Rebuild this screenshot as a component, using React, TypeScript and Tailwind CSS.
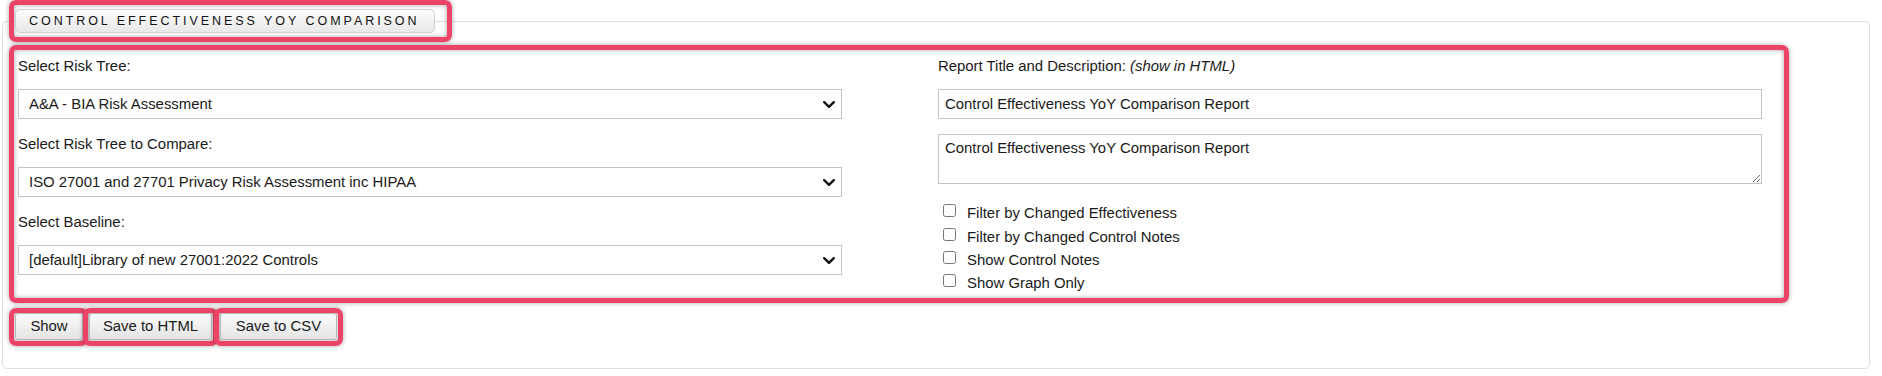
import React from "react";

const redBox =
  "border-[5px] border-[#eb4468] rounded-[7px] shadow-[0_0_5px_rgba(0,0,0,0.35),inset_0_0_5px_rgba(0,0,0,0.35)]";

const btn =
  "h-[27px] rounded-[3px] border border-[#b9b9b9] bg-gradient-to-b from-[#fbfbfb] to-[#e4e4e4] text-[14.9px] leading-[17px] text-[#1a1a1a] flex items-center justify-center";

function Chevron() {
  return (
    <svg
      className="absolute right-[7px] top-[12px] pointer-events-none"
      width="12"
      height="7"
      viewBox="0 0 12 7"
      fill="none"
    >
      <path d="M1.2 1.2 L6 5.8 L10.8 1.2" stroke="#111" strokeWidth="2.4" strokeLinecap="round" strokeLinejoin="round" />
    </svg>
  );
}

function Select({ value }: { value: string }) {
  return (
    <div className="relative w-[824px] h-[30px]">
      <select
        defaultValue={value}
        className="appearance-none w-full h-full border border-[#c4c4c4] bg-white pl-[10px] pr-[28px] text-[14.9px] text-[#1a1a1a] outline-none font-['Liberation_Sans',Arial,sans-serif]"
      >
        <option>{value}</option>
      </select>
      <Chevron />
    </div>
  );
}

function Check({ label }: { label: string }) {
  return (
    <div className="flex items-center h-[23.4px]">
      <input type="checkbox" className="w-[13px] h-[13px] m-0 ml-[5px]" />
      <span className="ml-[11px] mt-[6px] leading-[17px]">{label}</span>
    </div>
  );
}

export default function App() {
  return (
    <div className="w-[1882px] h-[376px] bg-white overflow-hidden font-['Liberation_Sans',Arial,sans-serif] text-[14.9px] text-[#1a1a1a]">
      <div className="h-[21px]" />
      <div className="ml-[2px] w-[1868px] h-[348px] border border-[#dfdfdf] rounded-[5px]">
        {/* Tab */}
        <div className={`-mt-[22px] ml-[6px] w-[443px] h-[42px] pt-[4px] pl-[1px] ${redBox}`}>
          <div className="w-[420px] h-[24px] rounded-[5px] border border-[#d0d0d0] bg-gradient-to-b from-[#fdfdfd] to-[#e8e8e8] flex items-center pl-[13px] text-[12.5px] tracking-[2.95px] text-[#111] leading-none">
            CONTROL EFFECTIVENESS YOY COMPARISON
          </div>
        </div>

        {/* Main */}
        <div className={`mt-[3px] ml-[6px] w-[1780px] h-[258px] pt-[8px] pl-[4px] ${redBox}`}>
          <div className="grid grid-cols-[920px_824px]">
            <div className="flex flex-col">
              <div className="h-[17px] leading-[17px]">Select Risk Tree:</div>
              <div className="mt-[14px]">
                <Select value="A&A - BIA Risk Assessment" />
              </div>
              <div className="mt-[17px] h-[17px] leading-[17px]">Select Risk Tree to Compare:</div>
              <div className="mt-[14px]">
                <Select value="ISO 27001 and 27701 Privacy Risk Assessment inc HIPAA" />
              </div>
              <div className="mt-[17px] h-[17px] leading-[17px]">Select Baseline:</div>
              <div className="mt-[14px]">
                <Select value="[default]Library of new 27001:2022 Controls" />
              </div>
            </div>
            <div className="flex flex-col">
              <div className="h-[17px] leading-[17px]">
                Report Title and Description: <i>(show in HTML)</i>
              </div>
              <input
                type="text"
                defaultValue="Control Effectiveness YoY Comparison Report"
                className="mt-[14px] w-[824px] h-[30px] border border-[#c4c4c4] pl-[6px] text-[14.9px] text-[#1a1a1a] outline-none font-['Liberation_Sans',Arial,sans-serif]"
              />
              <textarea
                defaultValue="Control Effectiveness YoY Comparison Report"
                className="mt-[15px] w-[824px] h-[50px] border border-[#c4c4c4] pl-[6px] pt-[5px] leading-[17px] text-[14.9px] text-[#1a1a1a] outline-none font-['Liberation_Sans',Arial,sans-serif]"
              />
              <div className="mt-[15px] flex flex-col">
                <Check label="Filter by Changed Effectiveness" />
                <Check label="Filter by Changed Control Notes" />
                <Check label="Show Control Notes" />
                <Check label="Show Graph Only" />
              </div>
            </div>
          </div>
        </div>

        {/* Buttons */}
        <div className="mt-[5px] ml-[6px] flex">
          <div className={`w-[79px] h-[38px] pl-[1px] ${redBox}`}>
            <button className={`${btn} w-[68px]`}>Show</button>
          </div>
          <div className={`-ml-[5px] w-[135px] h-[38px] pl-[1px] ${redBox}`}>
            <button className={`${btn} w-[123px]`}>Save to HTML</button>
          </div>
          <div className={`-ml-[4px] w-[129px] h-[38px] pl-[1px] ${redBox}`}>
            <button className={`${btn} w-[117px]`}>Save to CSV</button>
          </div>
        </div>
      </div>
    </div>
  );
}
